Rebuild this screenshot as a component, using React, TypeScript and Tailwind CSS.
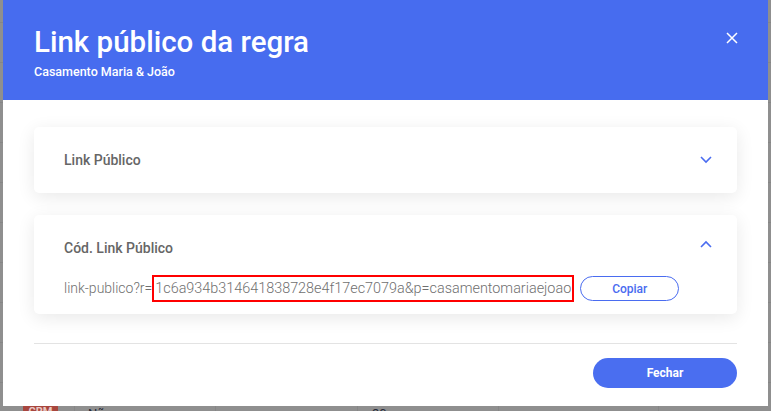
import React from "react";

const font = { fontFamily: "Roboto, 'Noto Sans', sans-serif" };

const Chevron: React.FC<{ up?: boolean }> = ({ up }) => (
  <svg width="12" height="8" viewBox="0 0 12 8" fill="none" className="text-[#4a6cf0]">
    <polyline
      points={up ? "1,7 6,2 11,7" : "1,1 6,6 11,1"}
      stroke="currentColor"
      strokeWidth="1.6"
    />
  </svg>
);

const BackgroundTable: React.FC = () => {
  const rows = Array.from({ length: 9 });
  return (
    <div className="flex flex-col">
      <div className="h-[23px] border-b border-[#868686]" />
      {rows.map((_, i) => (
        <div key={i} className="h-[40px] border-b border-[#868686]" />
      ))}
      <div className="relative flex h-[40px] items-start pt-[21px] text-[13px] text-[#252a38]">
        <div className="flex w-[75px] justify-center border-r border-[#868686] pl-[7px]">
          <span className="rounded-[3px] bg-[#a8463e] px-[6px] text-[11px] font-bold text-[#e8c8c4]">CRM</span>
        </div>
        <div className="w-[141px] border-r border-[#868686] pl-[13px]">Não</div>
        <div className="w-[142px] border-r border-[#868686] pl-[14px]">-</div>
        <div className="w-[141px] border-r border-[#868686] pl-[14px]">30</div>
        <div className="w-[160px] border-r border-[#868686] pl-[15px]">-</div>
        <div className="pl-[15px]">-</div>
      </div>
    </div>
  );
};

export default function App() {
  return (
    <div className="relative h-[411px] w-[771px] overflow-hidden bg-[#8f8f8f]" style={font}>
      <BackgroundTable />

      <div className="absolute left-[3px] top-0 flex h-[406px] w-[765px] flex-col bg-white">
        <div className="relative h-[100px] bg-[#476cef] px-[31px] pt-[25px] text-white">
          <h1 className="text-[29.5px] font-medium leading-[35px]">Link público da regra</h1>
          <p className="mt-[4px] text-[12.5px] font-medium leading-[16px]">Casamento Maria &amp; João</p>
          <button className="absolute right-[30px] top-[32px] p-0">
            <svg width="12" height="12" viewBox="0 0 12 12" fill="none">
              <path d="M1 1 L11 11 M11 1 L1 11" stroke="white" strokeWidth="1.5" />
            </svg>
          </button>
        </div>

        <div className="flex flex-col px-[31px] pt-[27px]">
          <div className="flex h-[66px] items-center justify-between rounded-[5px] bg-white pl-[30px] pr-[25px] shadow-[0_4px_18px_rgba(0,0,0,0.09)]">
            <span className="text-[14px] font-medium text-[#666666]">Link Público</span>
            <Chevron />
          </div>

          <div className="mt-[22px] rounded-[5px] bg-white pb-[12px] pl-[30px] pr-[25px] shadow-[0_4px_18px_rgba(0,0,0,0.09)]">
            <div className="flex h-[66px] items-center justify-between">
              <span className="text-[14px] font-medium text-[#666666]">Cód. Link Público</span>
              <span className="-mt-[8px]">
                <Chevron up />
              </span>
            </div>
            <div className="-mt-[6px] flex h-[27px] items-center">
              <span className="text-[14px] font-light text-[#6f6f6f]">link-publico?r=</span>
              <span className="flex h-[27px] items-center border-2 border-[#ff0000] pl-px pr-[1px] text-[14.4px] font-light text-[#6f6f6f]">
                1c6a934b314641838728e4f17ec7079a&amp;p=casamentomariaejoao
              </span>
              <button className="ml-[6px] h-[25px] w-[99px] rounded-full border border-[#4a6cf0] text-[12px] font-medium text-[#4a6cf0]">
                Copiar
              </button>
            </div>
          </div>

          <div className="mt-[29px] h-px bg-[#e3e3e3]" />

          <div className="mt-[14px] flex justify-end">
            <button className="h-[30px] w-[144px] rounded-full bg-[#4a6ef0] text-[12px] font-bold text-white">
              Fechar
            </button>
          </div>
        </div>
      </div>
    </div>
  );
}
